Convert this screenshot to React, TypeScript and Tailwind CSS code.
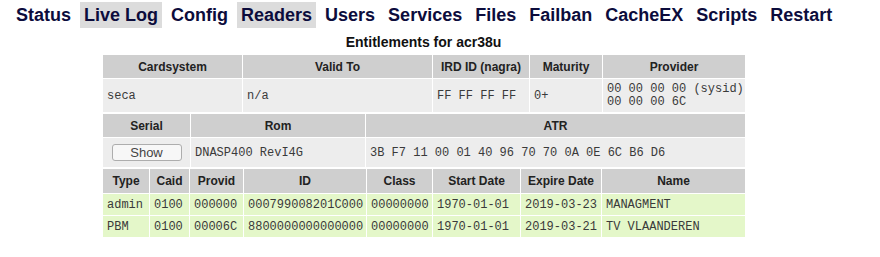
const NAV = [
  { label: "Status" },
  { label: "Live Log", active: true },
  { label: "Config" },
  { label: "Readers", active: true },
  { label: "Users" },
  { label: "Services" },
  { label: "Files" },
  { label: "Failban" },
  { label: "CacheEX" },
  { label: "Scripts" },
  { label: "Restart" },
];

const ENTITLEMENTS = [
  ["admin", "0100", "000000", "000799008201C000", "00000000", "1970-01-01", "2019-03-23", "MANAGMENT"],
  ["PBM", "0100", "00006C", "8800000000000000", "00000000", "1970-01-01", "2019-03-21", "TV VLAANDEREN"],
];

const th = "border border-white bg-[#cfcfcf] text-center align-middle font-bold text-[12px] text-[#222]";
const td = "border border-white bg-[#ededed] px-[4px] align-middle text-left text-[12px] text-[#3a3a3a] font-['Liberation_Mono',monospace]";
const tdGreen = "border border-white bg-[#e4f7c9] px-[4px] align-middle text-left text-[12px] text-[#3a3a3a] font-['Liberation_Mono',monospace] whitespace-nowrap";

function Cols({ widths }: { widths: number[] }) {
  return (
    <colgroup>
      {widths.map((w, i) => (
        <col key={i} style={{ width: w }} />
      ))}
    </colgroup>
  );
}

export default function App() {
  return (
    <div className="h-[257px] w-[880px] bg-white font-['Liberation_Sans',Arial,sans-serif]">
      <nav className="flex gap-[5px] pl-[12px] pt-[2px]">
        {NAV.map((item) => (
          <span
            key={item.label}
            className={
              "h-[26px] px-[4px] text-[18px] font-bold leading-[27px] text-[#0c0c3c] " +
              (item.active ? "bg-[#dcdcdc]" : "")
            }
          >
            {item.label}
          </span>
        ))}
      </nav>

      <div className="w-[847px]">
        <h2 className="mt-[4px] text-center text-[14px] font-bold leading-[20px] text-[#111]">
          Entitlements for acr38u
        </h2>

        <div className="ml-[102px] mt-[2px] flex w-[643px] flex-col">
          <table className="w-[643px] table-fixed border-collapse">
            <Cols widths={[140, 190, 97, 73, 143]} />
            <tbody>
              <tr className="h-[24px]">
                <th className={th}>Cardsystem</th>
                <th className={th}>Valid To</th>
                <th className={th}>IRD ID (nagra)</th>
                <th className={th}>Maturity</th>
                <th className={th}>Provider</th>
              </tr>
              <tr className="h-[34px]">
                <td className={td}>seca</td>
                <td className={td}>n/a</td>
                <td className={td}>FF FF FF FF</td>
                <td className={td}>0+</td>
                <td className={td + " leading-[13px] whitespace-nowrap"}>
                  00 00 00 00 (sysid)
                  <br />
                  00 00 00 6C
                </td>
              </tr>
            </tbody>
          </table>

          <table className="w-[643px] table-fixed border-collapse">
            <Cols widths={[88, 175, 380]} />
            <tbody>
              <tr className="h-[24px]">
                <th className={th}>Serial</th>
                <th className={th}>Rom</th>
                <th className={th}>ATR</th>
              </tr>
              <tr className="h-[30px]">
                <td className={td + " text-center"}>
                  <button
                    type="button"
                    className="mx-auto block h-[17px] w-[70px] rounded-[3px] border border-[#adadad] bg-[#f7f7f7] font-['Liberation_Sans',Arial,sans-serif] text-[13px] leading-[15px] text-[#444]"
                  >
                    Show
                  </button>
                </td>
                <td className={td}>DNASP400 RevI4G</td>
                <td className={td + " whitespace-nowrap"}>3B F7 11 00 01 40 96 70 70 0A 0E 6C B6 D6</td>
              </tr>
            </tbody>
          </table>

          <table className="w-[643px] table-fixed border-collapse">
            <Cols widths={[47, 40, 54, 123, 66, 88, 81, 144]} />
            <tbody>
              <tr className="h-[25px]">
                {["Type", "Caid", "Provid", "ID", "Class", "Start Date", "Expire Date", "Name"].map((h) => (
                  <th key={h} className={th}>
                    {h}
                  </th>
                ))}
              </tr>
              {ENTITLEMENTS.map((row) => (
                <tr key={row[0]} className="h-[22px]">
                  {row.map((cell, i) => (
                    <td key={i} className={tdGreen}>
                      {cell}
                    </td>
                  ))}
                </tr>
              ))}
            </tbody>
          </table>
        </div>
      </div>
    </div>
  );
}
